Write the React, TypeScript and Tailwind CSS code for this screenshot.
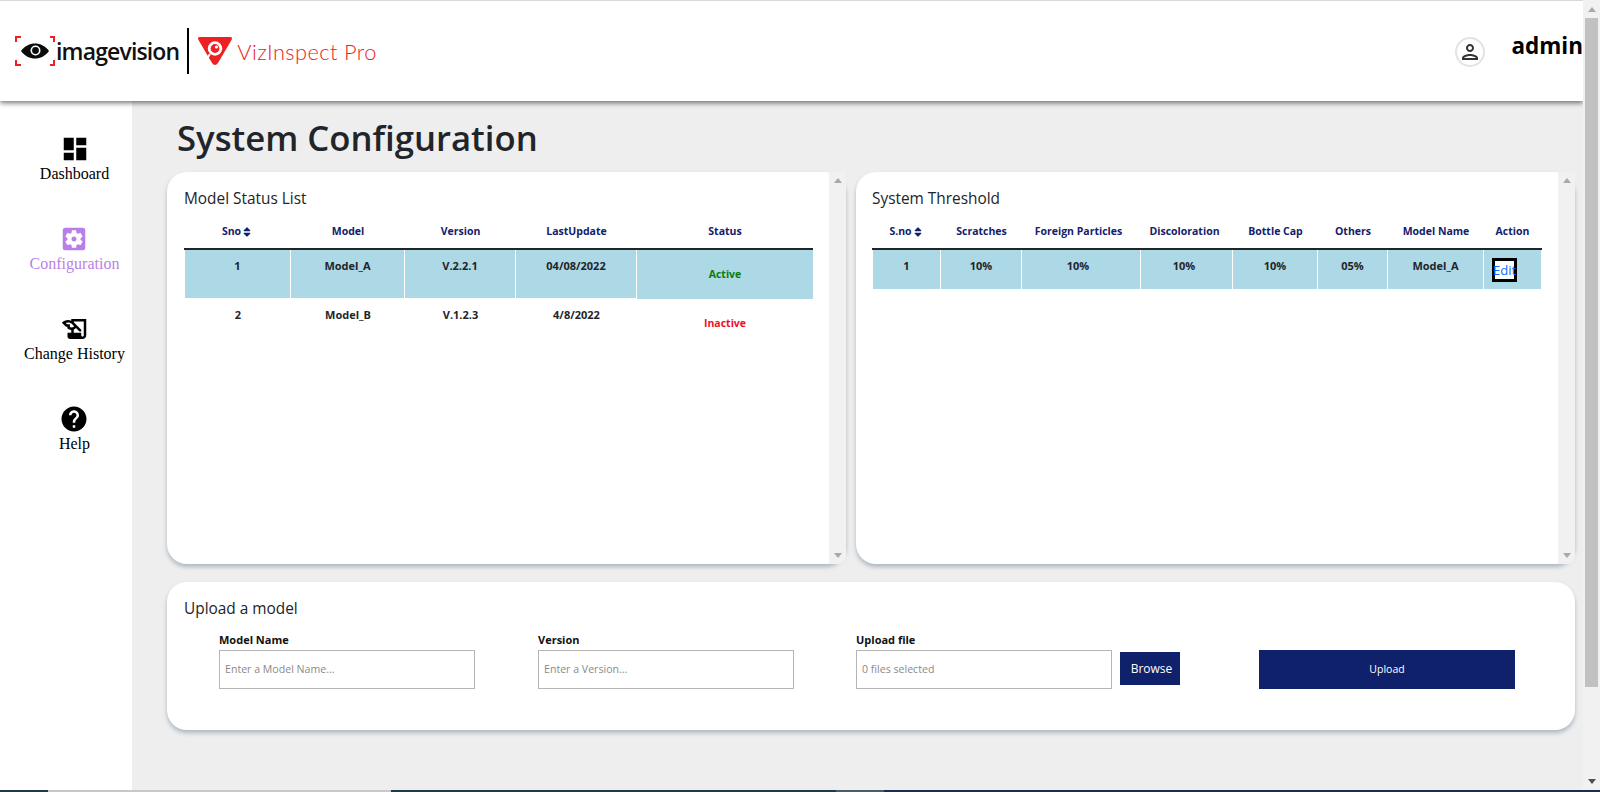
import { FaSort } from "react-icons/fa";
import {
  MdDashboard,
  MdHelp,
  MdHistoryEdu,
  MdOutlinePerson,
  MdSettingsApplications,
} from "react-icons/md";

const NAV = [
  { label: "Dashboard", icon: MdDashboard },
  { label: "Configuration", icon: MdSettingsApplications, active: true },
  { label: "Change History", icon: MdHistoryEdu },
  { label: "Help", icon: MdHelp },
];

const MODEL_COLS = ["w-[107px]", "w-[114px]", "w-[111px]", "w-[121px]", "w-[176px]"];
const MODEL_CELLS = ["ml-[1px] w-[106px]", "w-[114px]", "w-[111px]", "w-[121px]"];
const THRESHOLD_COLS = [
  "w-[69px]",
  "w-[81px]",
  "w-[119px] pr-[6px]",
  "w-[92px] pr-[5px]",
  "w-[85px]",
  "w-[70px]",
  "w-[96px]",
  "w-[57px]",
];

function Logo() {
  return (
    <div className="flex items-center">
      <svg width="42" height="32" viewBox="0 0 42 32" className="shrink-0">
        <path d="M1 7V2h5M1 25v5h5M35 2h4v5M35 30h4v-5" fill="none" stroke="#ed2024" strokeWidth="2" />
        <path d="M6 16C13 6 27 6 34 16 27 26 13 26 6 16Z" fill="#0b0b0b" />
        <circle cx="20.5" cy="15.5" r="5" fill="#fff" />
        <circle cx="20.5" cy="15.5" r="3.4" fill="#0b0b0b" />
      </svg>
      <span className="mt-[1px] ml-[-1px] font-['Open_Sans',sans-serif] text-[23px] leading-none font-semibold tracking-[-0.85px] text-[#111]">
        imagevision
      </span>
      <div className="mx-[8px] h-[46px] w-[2px] bg-black" />
      <svg width="36" height="30" viewBox="0 0 36 30" className="shrink-0">
        <path d="M3 1H33Q36 1 34.5 4L21 27Q18 31 15 27L1.5 4Q0 1 3 1Z" fill="#ed2024" />
        <circle cx="18" cy="12.5" r="7.2" fill="#fff" />
        <circle cx="18" cy="12.5" r="4.4" fill="#ed2024" />
        <circle cx="19.5" cy="11" r="1.6" fill="#fff" />
        <path d="M13 18l-4 6" stroke="#fff" strokeWidth="2" />
      </svg>
      <span className="mt-[2px] ml-[4px] font-['Lato',sans-serif] text-[21.8px] leading-none font-light tracking-[0.4px] text-[#ed2024]">
        VizInspect Pro
      </span>
    </div>
  );
}

function Sidebar() {
  return (
    <nav className="flex w-[132px] shrink-0 flex-col items-center gap-[38px] bg-white pt-[33px] pl-[17px] font-['Liberation_Serif',serif] text-[16px]">
      {NAV.map(({ label, icon: Icon, active }) => (
        <div
          key={label}
          className={`flex h-[52px] flex-col items-center ${active ? "text-[#b97fe9]" : "text-black"}`}
        >
          <Icon size={30} />
          <span className="mt-[-2px] leading-[24px] whitespace-nowrap">{label}</span>
        </div>
      ))}
    </nav>
  );
}

function CardScrollbar() {
  return (
    <div className="flex w-[17px] shrink-0 flex-col items-center justify-between rounded-br-[8px] bg-[#f1f1f1] py-[6px]">
      <div className="h-0 w-0 border-x-[4px] border-b-[5px] border-x-transparent border-b-[#a9a9a9]" />
      <div className="h-0 w-0 border-x-[4px] border-t-[5px] border-x-transparent border-t-[#a9a9a9]" />
    </div>
  );
}

function HeaderRow({ cols, labels }: { cols: string[]; labels: string[] }) {
  return (
    <div className="flex h-[30px] items-start border-b-2 border-[#212529] text-[10.5px] leading-[15px] font-bold text-[#13206b]">
      {labels.map((label, i) => (
        <div key={label} className={`${cols[i]} flex shrink-0 items-center justify-center pt-[4px] whitespace-nowrap`}>
          {label}
          {i === 0 && <FaSort size={12} />}
        </div>
      ))}
    </div>
  );
}

function ModelTable() {
  const labels = ["Sno", "Model", "Version", "LastUpdate", "Status"];
  const rows = [
    { cells: ["1", "Model_A", "V.2.2.1", "04/08/2022"], status: "Active", color: "text-[#0a7d0a]", on: true },
    { cells: ["2", "Model_B", "V.1.2.3", "4/8/2022"], status: "Inactive", color: "text-[#f00f24]", on: false },
  ];
  return (
    <div>
      <HeaderRow cols={MODEL_COLS} labels={labels} />
      {rows.map((row) => (
        <div key={row.status} className="flex items-start text-[11px] leading-[18px] font-bold text-[#212529]">
          {row.cells.map((cell, i) => (
            <div
              key={cell}
              className={`${MODEL_CELLS[i]} h-[48px] shrink-0 pt-[7px] text-center ${row.on ? "border-r border-white bg-[#add8e6]" : ""}`}
            >
              {cell}
            </div>
          ))}
          <div className={`h-[49px] w-[176px] shrink-0 pt-[15px] text-center text-[10.5px] ${row.color} ${row.on ? "bg-[#add8e6]" : ""}`}>
            {row.status}
          </div>
        </div>
      ))}
    </div>
  );
}

function ThresholdTable() {
  const labels = ["S.no", "Scratches", "Foreign Particles", "Discoloration", "Bottle Cap", "Others", "Model Name", "Action"];
  const cells = ["1", "10%", "10%", "10%", "10%", "05%", "Model_A"];
  return (
    <div>
      <HeaderRow cols={THRESHOLD_COLS} labels={labels} />
      <div className="flex pl-[1px] text-[11px] leading-[18px] font-bold text-[#212529]">
        {cells.map((cell, i) => (
          <div
            key={i}
            className={`h-[39px] shrink-0 border-r border-white bg-[#add8e6] pt-[7px] text-center ${i === 0 ? "w-[68px]" : THRESHOLD_COLS[i]}`}
          >
            {cell}
          </div>
        ))}
        <div className="h-[39px] w-[57px] shrink-0 bg-[#add8e6] pt-[8px] pl-[8px]">
          <div className="h-[24px] w-[25px] border-[3px] border-black bg-white text-[13px] leading-[19px] font-normal whitespace-nowrap text-[#0d6efd]">
            <span className="ml-[-2px] block">Edit</span>
          </div>
        </div>
      </div>
    </div>
  );
}

function Panel({ title, wide, children }: { title: string; wide?: boolean; children: React.ReactNode }) {
  return (
    <section
      className={`flex h-[392px] rounded-[20px] bg-white shadow-[0_3px_4px_rgba(120,140,160,0.55)] ${wide ? "w-[719px]" : "w-[679px]"}`}
    >
      <div className={`flex-1 pt-[16px] pr-[16px] ${wide ? "pl-[16px]" : "pl-[17px]"}`}>
        <h2 className="mb-[11px] text-[15.4px] leading-[21px] font-medium text-[#212529]">{title}</h2>
        {children}
      </div>
      <CardScrollbar />
    </section>
  );
}

function Field({ label, placeholder }: { label: string; placeholder: string }) {
  return (
    <div className="w-[256px]">
      <div className="mb-[2px] text-[11px] leading-[16px] font-bold text-[#111]">{label}</div>
      <div className="flex h-[39px] items-center border border-[#b5b5b5] pt-[1px] pl-[5px] text-[10.6px] text-[#8a8a8a]">
        {placeholder}
      </div>
    </div>
  );
}

function UploadCard() {
  return (
    <section className="mt-[18px] h-[148px] w-[1408px] rounded-[20px] bg-white pt-[16px] pl-[17px] shadow-[0_3px_4px_rgba(120,140,160,0.55)]">
      <h2 className="text-[15.4px] leading-[21px] font-medium text-[#212529]">Upload a model</h2>
      <div className="mt-[13px] flex items-end pl-[35px]">
        <Field label="Model Name" placeholder="Enter a Model Name..." />
        <div className="ml-[63px]">
          <Field label="Version" placeholder="Enter a Version..." />
        </div>
        <div className="ml-[62px]">
          <Field label="Upload file" placeholder="0 files selected" />
        </div>
        <button className="mb-[4px] ml-[8px] h-[33px] w-[60px] bg-[#10216b] pl-[3px] text-[12px] text-white">Browse</button>
        <button className="ml-[79px] h-[39px] w-[256px] bg-[#10216b] text-[10.5px] text-white">Upload</button>
      </div>
    </section>
  );
}

export default function App() {
  return (
    <div className="flex h-[792px] w-[1600px] flex-col overflow-hidden bg-[#eeeeee] font-['Open_Sans',sans-serif]">
      <div className="flex min-h-0 flex-1">
        <div className="flex w-[1583px] flex-col overflow-hidden border-t border-[#d9d9d9]">
          <header className="relative z-10 flex h-[100px] shrink-0 items-center justify-between bg-white pl-[15px] shadow-[0_2px_5px_rgba(0,0,0,0.55)]">
            <Logo />
            <div className="flex items-center">
              <div className="mt-[1px] flex h-[30px] w-[30px] items-center justify-center rounded-full border-2 border-[#e3e3e3] text-[#333]">
                <MdOutlinePerson size={24} />
              </div>
              <span className="mb-[11px] ml-[26px] text-[22.5px] leading-[30px] font-bold text-black">admin</span>
            </div>
          </header>
          <div className="flex min-h-0 flex-1">
            <Sidebar />
            <main className="min-w-0 flex-1 pl-[35px]">
              <h1 className="mt-[12px] ml-[10px] text-[34.7px] leading-[50px] font-semibold text-[#212529]">
                System Configuration
              </h1>
              <div className="mt-[9px] flex gap-[10px]">
                <Panel title="Model Status List">
                  <ModelTable />
                </Panel>
                <Panel title="System Threshold" wide>
                  <ThresholdTable />
                </Panel>
              </div>
              <UploadCard />
            </main>
          </div>
        </div>
        <div className="flex w-[17px] shrink-0 flex-col items-center bg-[#f1f1f1] pt-[7px]">
          <div className="h-0 w-0 border-x-[4px] border-b-[5px] border-x-transparent border-b-[#a9a9a9]" />
          <div className="mt-[6px] h-[669px] w-[13px] bg-[#c1c1c1]" />
          <div className="mt-auto mb-[6px] h-0 w-0 border-x-[4px] border-t-[5px] border-x-transparent border-t-[#505050]" />
        </div>
      </div>
      <div className="flex h-[2px] shrink-0">
        <div className="w-[48px] bg-[#1d3a46]" />
        <div className="w-[343px] bg-[#c8c8c8]" />
        <div className="w-[445px] bg-[#1d3a46]" />
        <div className="w-[48px] bg-[#4a5c66]" />
        <div className="flex-1 bg-[#1c2d4a]" />
      </div>
    </div>
  );
}
